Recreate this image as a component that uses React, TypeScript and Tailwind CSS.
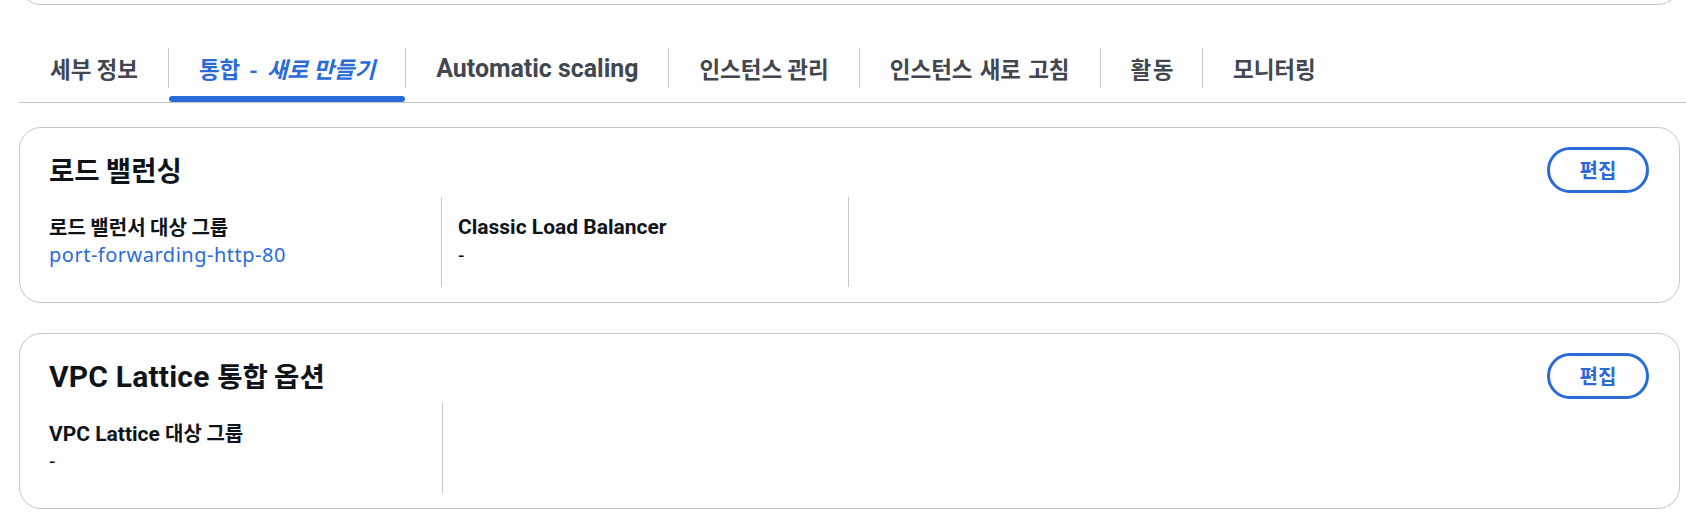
import React from "react";

const KR = "font-['Noto_Sans_CJK_KR',sans-serif]";

function TabK({ children, italic, extra = "" }: { children: React.ReactNode; italic?: boolean; extra?: string }) {
  return (
    <span className={`${KR} text-[22.5px] font-bold ${italic ? "italic" : ""} ${extra}`}>{children}</span>
  );
}

const TitleK = ({ children }: { children: React.ReactNode }) => (
  <span className={`${KR} text-[27.5px] tracking-normal font-bold`}>{children}</span>
);

const LabelK = ({ children }: { children: React.ReactNode }) => (
  <span className={`${KR} text-[20px] font-bold`}>{children}</span>
);

function Sep() {
  return <div className="w-px h-[40px] mt-[6px] bg-[#c6c6cd] shrink-0" />;
}

function Tab({
  children,
  active,
  first,
  pad = "px-[30px]",
}: {
  children: React.ReactNode;
  active?: boolean;
  first?: boolean;
  pad?: string;
}) {
  return (
    <div className="flex flex-col shrink-0">
      <div
        className={`flex-1 flex items-center ${first ? "pl-[31px] pr-[30px]" : pad} whitespace-nowrap ${
          active ? "text-[#2a6bd8]" : "text-[#424650]"
        }`}
      >
        {children}
      </div>
      <div className={`h-[6px] rounded-full ${active ? "bg-[#2a6bd8]" : ""}`} />
    </div>
  );
}

function EditButton() {
  return (
    <button className="h-[46px] w-[102px] shrink-0 rounded-full border-[3px] border-[#2a6bd8] flex items-center justify-center text-[#2a6bd8] bg-white">
      <span className={`${KR} text-[20px] font-bold leading-none`}>편집</span>
    </button>
  );
}

function Field({ label, value, link }: { label: React.ReactNode; value: string; link?: boolean }) {
  return (
    <div className="flex flex-col">
      <div className="h-[28px] leading-[28px] whitespace-nowrap text-[#0f141a] font-['Roboto',sans-serif] font-bold text-[21px]">
        {label}
      </div>
      <div
        className={`h-[28px] leading-[28px] whitespace-nowrap font-['Noto_Sans',sans-serif] text-[20px] tracking-[0.5px] ${
          link ? "text-[#2a6bd8]" : "text-[#0f141a]"
        }`}
      >
        {value}
      </div>
    </div>
  );
}

function Card({
  title,
  children,
  cols,
  className = "",
}: {
  title: React.ReactNode;
  children: React.ReactNode;
  cols: string;
  className?: string;
}) {
  return (
    <div
      className={`ml-[19px] mr-[6px] rounded-[22px] border border-[#c6c6cd] bg-white pt-[19px] pb-[15px] pl-[29px] pr-[30px] ${className}`}
    >
      <div className="flex items-center justify-between h-[46px]">
        <h2 className="font-['Roboto',sans-serif] font-bold text-[30px] tracking-[0.2px] text-[#0f141a] whitespace-nowrap leading-[46px]">
          {title}
        </h2>
        <EditButton />
      </div>
      <div className={`mt-[4px] grid h-[90px] ${cols}`}>{children}</div>
    </div>
  );
}

export default function App() {
  return (
    <div className="w-[1686px] h-[528px] bg-white overflow-hidden font-['Roboto','Noto_Sans_CJK_KR',sans-serif]">
      {/* previous card (cut off) */}
      <div className="h-[5px] overflow-hidden flex flex-col justify-end ml-[19px] mr-[6px]">
        <div className="h-[60px] shrink-0 rounded-[22px] border border-[#c6c6cd]" />
      </div>

      {/* tabs */}
      <div className="mt-[37px] ml-[19px] h-[61px] flex border-b border-[#c6c6cd]">
        <Tab first>
          <TabK>세부 정보</TabK>
        </Tab>
        <Sep />
        <Tab active>
          <TabK>통합</TabK>
          <span className={`${KR} text-[22.5px] font-bold mx-[9px]`}>-</span>
          <TabK italic>새로 만들기</TabK>
        </Tab>
        <Sep />
        <Tab>
          <span className="font-['Roboto',sans-serif] font-bold text-[24.9px]">Automatic scaling</span>
        </Tab>
        <Sep />
        <Tab>
          <TabK>인스턴스 관리</TabK>
        </Tab>
        <Sep />
        <Tab>
          <TabK extra="[word-spacing:2px]">인스턴스 새로 고침</TabK>
        </Tab>
        <Sep />
        <Tab pad="pl-[30px] pr-[27px]">
          <TabK extra="tracking-[1.5px]">활동</TabK>
        </Tab>
        <Sep />
        <Tab>
          <TabK>모니터링</TabK>
        </Tab>
      </div>

      {/* Load balancing */}
      <Card className="mt-[24px]" title={<TitleK>로드 밸런싱</TitleK>} cols="grid-cols-[392px_407px_1fr]">
        <div className="pt-[16px]">
          <Field label={<LabelK>로드 밸런서 대상 그룹</LabelK>} value="port-forwarding-http-80" link />
        </div>
        <div className="pt-[16px] pl-[16px] border-l border-[#c6c6cd]">
          <Field label="Classic Load Balancer" value="-" />
        </div>
        <div className="border-l border-[#c6c6cd]" />
      </Card>

      {/* VPC Lattice */}
      <Card
        className="mt-[30px]"
        title={
          <>
            VPC Lattice <TitleK>통합 옵션</TitleK>
          </>
        }
        cols="grid-cols-[393px_1fr]"
      >
        <div className="pt-[16px]">
          <Field
            label={
              <>
                VPC Lattice <LabelK>대상 그룹</LabelK>
              </>
            }
            value="-"
          />
        </div>
        <div className="border-l border-[#c6c6cd]" />
      </Card>
    </div>
  );
}
